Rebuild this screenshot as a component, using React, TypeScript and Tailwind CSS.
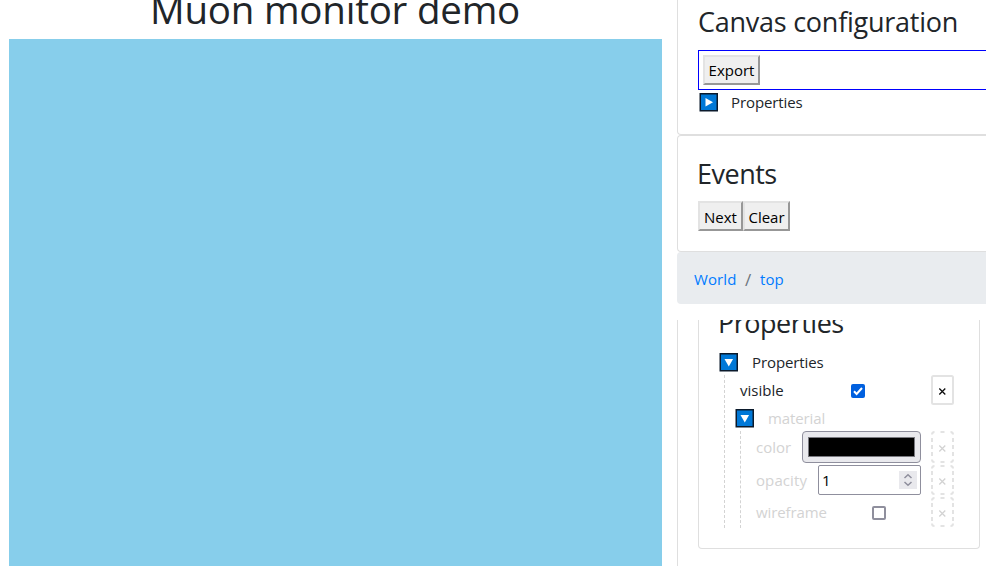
import { ReactNode } from 'react';

const heading = 'whitespace-nowrap text-[27px] leading-[34px] text-[#212529]';

function Toggle({ open = false }: { open?: boolean }) {
  return (
    <svg width="19" height="19" viewBox="0 0 19 19" className="shrink-0">
      <rect x="1.250" y="0.750" width="17" height="17" fill="#0078d7" stroke="#0b1a2c" strokeWidth="1.500" />
      {open ? <path d="M5.500 6h8.600l-4.300 7.500z" fill="#fff" /> : <path d="M6.500 5v8.600l7.500-4.300z" fill="#fff" />}
    </svg>
  );
}

function Button({ className, children }: { className: string; children: ReactNode }) {
  return (
    <button
      className={`flex h-[30px] items-center justify-center whitespace-nowrap border-2 border-t-[#e3e3e3] border-l-[#e3e3e3] border-r-[#979797] border-b-[#979797] bg-[#efefef] text-[15px] text-black ${className}`}
    >
      {children}
    </button>
  );
}

function Remove({ dashed = false, tall = false }: { dashed?: boolean; tall?: boolean }) {
  const h = tall ? 32 : 30;
  const b = h - 1;
  const m = h / 2;
  return (
    <svg width="23" height={h} viewBox={`0 0 23 ${h}`} className="shrink-0" fill="none">
      {dashed ? (
        <path
          d={`M1 3.500Q1 1 3.500 1M9.500 1h4M19.500 1Q22 1 22 3.500M1 ${b - 2.500}Q1 ${b} 3.500 ${b}M9.500 ${b}h4M19.500 ${b}Q22 ${b} 22 ${b - 2.500}M1 ${m - 9}v4M1 ${m - 2}v4M1 ${m + 5}v4M22 ${m - 9}v4M22 ${m - 2}v4M22 ${m + 5}v4`}
          stroke="#e3e3e3"
          strokeWidth="2"
        />
      ) : (
        <rect x="1" y="1" width="21" height={h - 2} rx="1.500" stroke="#e3e3e3" strokeWidth="2" />
      )}
      <path d={`M8.300 ${m - 1.500}l6 6m0-6l-6 6`} stroke={dashed ? '#d3d3d3' : '#111'} strokeWidth="1.300" />
    </svg>
  );
}

export default function App() {
  return (
    <div className="flex h-[566px] w-[986px] overflow-hidden bg-white font-['Open_Sans','Noto_Sans',sans-serif] text-[15px] text-[#212529]">
      <main className="ml-[9px] flex w-[653px] shrink-0 flex-col">
        <h1 className="-mt-[15px] h-[54px] whitespace-nowrap pl-[141px] text-[38.5px] leading-[48px] tracking-[-0.22px]">
          Muon monitor demo
        </h1>
        <div className="flex-1 bg-[#87ceeb]" />
      </main>

      <aside className="ml-[15px] flex w-[320px] shrink-0 flex-col">
        <section className="h-[135px] rounded-bl-[4px] border-b border-l border-[#dfdfdf] pl-5 pt-[5px]">
          <h3 className={`${heading} tracking-[-0.25px]`}>Canvas configuration</h3>
          <div className="mt-[11px] h-10 border border-[#0000ff] p-1">
            <Button className="w-[57px]">Export</Button>
          </div>
          <div className="mt-[3px] flex h-[19px] items-center pl-px">
            <Toggle />
            <span className="ml-[13px] tracking-[-0.1px]">Properties</span>
          </div>
        </section>

        <section className="h-[117px] rounded-l-[4px] border border-r-0 border-[#dfdfdf] pl-5 pt-[21px]">
          <h3 className={`${heading} -ml-px tracking-[-0.5px]`}>Events</h3>
          <div className="mt-[10px] flex">
            <Button className="w-[45px] pt-[3px]">Next</Button>
            <Button className="w-[47px] pt-[3px]">Clear</Button>
          </div>
        </section>

        <nav className="flex h-[52px] shrink-0 items-center rounded-l-[4px] bg-[#e9ecef] pl-4 pt-[3px] text-[#007bff]">
          <span className="w-[43px] pl-px tracking-[0.1px]">World</span>
          <span className="w-6 text-center text-[17px] text-[#6c757d]">/</span>
          <span className="tracking-[0.1px]">top</span>
        </nav>

        <section className="mt-4 h-[246px] border-l border-[#dfdfdf] pl-5">
          <div className="h-[229px] w-[282px] overflow-hidden rounded-b-[4px] border border-t-0 border-[#dfdfdf] pl-5">
            <h3 className={`${heading} -ml-px -mt-[14px] tracking-[-0.5px]`}>Properties</h3>
            <div className="mt-[13px] flex h-[19px] items-center">
              <Toggle open />
              <span className="ml-[14px] tracking-[-0.1px]">Properties</span>
            </div>
            <div className="ml-[5px] mt-[3px] h-[153px] w-[230px] border-l border-dashed border-[#d3d3d3]">
              <div className="flex h-[30px] items-center">
                <span className="w-[111px] pl-[15px]">visible</span>
                <svg width="14" height="14" viewBox="0 0 14 14" className="ml-[14.500px] mt-px">
                  <rect width="14" height="14" rx="2" fill="#0060df" />
                  <path d="M3 7.300l2.600 2.700L11 4" fill="none" stroke="#fff" strokeWidth="2" />
                </svg>
                <div className="ml-[66.500px]">
                  <Remove />
                </div>
              </div>
              <div className="ml-[10px] mt-[4px] flex h-[19px] items-center text-[#d3d3d3]">
                <Toggle open />
                <span className="ml-[14px] tracking-[-0.1px]">material</span>
              </div>
              <div className="ml-[15px] mt-[3px] h-[97px] border-l border-dashed border-[#d3d3d3] text-[#d3d3d3]">
                <div className="flex h-8 items-center">
                  <span className="w-[61px] pl-[15px]">color</span>
                  <div className="h-8 w-[119px] rounded-[4px] border border-[#8f8f9d] bg-[#e9e9ed] p-[5px]">
                    <div className="h-5 border border-[#7a7a80] bg-black" />
                  </div>
                  <div className="ml-[10px]">
                    <Remove dashed tall />
                  </div>
                </div>
                <div className="mt-[2px] flex h-[30px] items-center">
                  <span className="w-[77px] pl-[15px] tracking-[0.1px]">opacity</span>
                  <div className="flex h-[30px] w-[103px] items-center justify-between rounded-[2px] border border-[#8f8f9d] pl-[3px] pr-[3px] text-black">
                    <span>1</span>
                    <svg width="18" height="18" viewBox="0 0 18 18" fill="none" stroke="#8f8f9d" strokeWidth="1.500">
                      <rect width="18" height="18" fill="#e9e9ed" stroke="none" />
                      <path d="M5.500 7l3.500-3.300L12.500 7M5.500 11l3.500 3.300L12.500 11" />
                    </svg>
                  </div>
                  <div className="ml-[10px]">
                    <Remove dashed />
                  </div>
                </div>
                <div className="mt-[2px] flex h-[30px] items-center">
                  <span className="w-[131px] pl-[15px] tracking-[-0.1px]">wireframe</span>
                  <div className="mt-px size-[14px] rounded-[2px] border-2 border-[#8f8f9d]" />
                  <div className="ml-[45px]">
                    <Remove dashed />
                  </div>
                </div>
              </div>
            </div>
          </div>
        </section>
      </aside>
    </div>
  );
}
